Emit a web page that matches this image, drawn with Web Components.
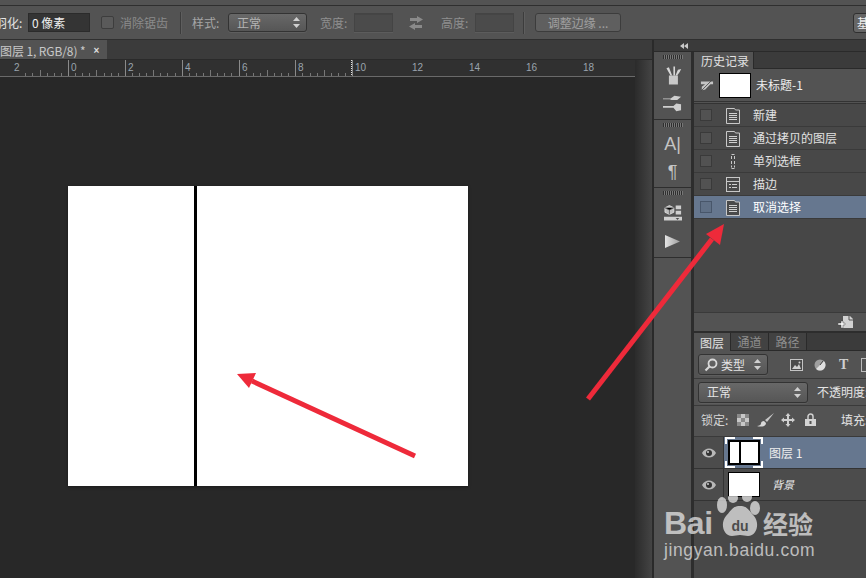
<!DOCTYPE html>
<html lang="zh"><head><meta charset="utf-8"><title>Photoshop</title>
<style>
html,body{margin:0;padding:0;width:866px;height:578px;overflow:hidden;background:#282828}
body{font:12px/1 "Noto Sans CJK SC","Liberation Sans",sans-serif;color:#ddd}
</style></head><body>
<ps-app></ps-app>
<script>
const ICONS={
swap:`<svg width="16" height="14" viewBox="0 0 16 14"><path d="M9 0l6 3.500L9 7V5H2V2h7zM7 7v2h7v3H7v2L1 10.500z" fill="#8a8a8a"/></svg>`,
doc:`<svg width="14" height="17" viewBox="0 0 14 17"><path d="M.5 1.500h8l1 1.500h4v13.500H.500z" fill="#4a4a4a" stroke="#c8c8c8"/><path d="M3 6.500h8M3 8.500h8M3 10.500h8M3 12.500h8" stroke="#d0d0d0"/></svg>`,
stroke:`<svg width="14" height="15" viewBox="0 0 14 15"><rect x=".5" y=".5" width="13" height="14" fill="#4a4a4a" stroke="#c8c8c8"/><path d="M1 4.500h12" stroke="#c8c8c8"/><path d="M3 7.500h2M6 7.500h5M3 10.500h2M6 10.500h5" stroke="#d0d0d0"/></svg>`,
marquee:`<svg width="14" height="17" viewBox="0 0 14 17"><path d="M5.500 1.500h3M5.500 15.500h3M5.500 3v3M8.500 3v3M5.500 8v3M8.500 8v3M5.500 12.500v2M8.500 12.500v2" stroke="#c8c8c8" fill="none"/></svg>`,
brushes:`<svg width="18" height="21" viewBox="0 0 22 24"><path d="M6 12h11v11H6z" fill="#c9c9c9"/><path d="M8 12L3 3l3-1 4 10zM11.500 12V1h2v11zM14 12l3-7 4-1-2 4-3 4z" fill="#d6d6d6"/></svg>`,
presets:`<svg width="19" height="17" viewBox="0 0 20 20" preserveAspectRatio="none"><path d="M0 4h8l4-3 7 1-4 4-6 0-2-1H0z" fill="#cfcfcf"/><path d="M0 13h11l3-3 5 1v7l-5 1-3-4H0z" fill="#cfcfcf"/></svg>`,
box:`<svg width="18" height="18" viewBox="0 0 20 24" preserveAspectRatio="none"><path d="M6 2l5 3v6l-5 3-5-3V5z" fill="#bdbdbd" stroke="#eee" stroke-width=".8"/><path d="M6 8v6M1 5l5 3 5-3" stroke="#555"/><path d="M13 2h6v5h-6zM13 9h6v5h-6z" fill="#cfcfcf"/><path d="M0 17h20v5H0z" fill="#cfcfcf"/><path d="M13 19h4l-2 2z" fill="#222"/></svg>`,
play:`<svg width="15" height="13" viewBox="0 0 16 15" preserveAspectRatio="none"><defs><linearGradient id="g" x1="0" x2="1"><stop offset="0" stop-color="#e4e4e4"/><stop offset="1" stop-color="#9d9d9d"/></linearGradient></defs><path d="M0 0l16 7.500L0 15z" fill="url(#g)"/></svg>`,
newdoc:`<svg width="15" height="13" viewBox="0 0 15 13"><path d="M5 0h7l3 3v9H5z" fill="#d2d2d2"/><path d="M11 0v4h4" fill="none" stroke="#555"/><path d="M3 5h2v2h2v2H5v3H3V9H0V7h3z" fill="#f2f2f2" stroke="#3a3a3a" stroke-width=".4"/></svg>`,
search:`<svg width="14" height="14" viewBox="0 0 14 14"><circle cx="8.500" cy="5.500" r="4" fill="none" stroke="#d8d8d8" stroke-width="1.800"/><path d="M5.500 8.500L1.500 12.500" stroke="#d8d8d8" stroke-width="2.200"/></svg>`,
image:`<svg width="13" height="12" viewBox="0 0 13 12"><rect x=".5" y=".5" width="12" height="11" fill="#4a4a4a" stroke="#c4c4c4"/><path d="M2 10l3-4 2 2 2-3 2 5z" fill="#d0d0d0"/><circle cx="9.500" cy="3.500" r="1" fill="#d0d0d0"/></svg>`,
half:`<svg width="12" height="12" viewBox="0 0 12 12"><circle cx="6" cy="6" r="5.500" fill="#a0a0a0"/><path d="M9.900 2.100A5.500 5.500 0 0 1 2.100 9.900z" fill="#e0e0e0"/><path d="M6 6L9 2" stroke="#444"/></svg>`,
checker:`<svg width="12" height="12" viewBox="0 0 12 12"><rect width="12" height="12" fill="#c8c8c8"/><path d="M0 0h4v4H0zM8 0h4v4H8zM4 4h4v4H4zM0 8h4v4H0zM8 8h4v4H8z" fill="#8a8a8a"/></svg>`,
brush:`<svg width="17" height="14" viewBox="0 0 17 14"><path d="M17 0L8 7l2 2z" fill="#c8c8c8"/><path d="M7 8c-2 0-3 1-3 2.500S2 13 0 13c3 1 9 1 9-3z" fill="#d8d8d8"/></svg>`,
move:`<svg width="14" height="14" viewBox="0 0 14 14"><path d="M7 0l2.500 3H8v3h3V4.500L14 7l-3 2.500V8H8v3h1.500L7 14l-2.500-3H6V8H3v1.500L0 7l3-2.500V6h3V3H4.500z" fill="#cfcfcf"/></svg>`,
lock:`<svg width="11" height="13" viewBox="0 0 11 13"><path d="M3 6V3.500a2.500 2.500 0 0 1 5 0V6" fill="none" stroke="#cfcfcf" stroke-width="1.500"/><rect y="6" width="11" height="7" fill="#d4d4d4"/><rect x="4.500" y="8" width="2" height="3" fill="#555"/></svg>`,
eye:`<svg width="14" height="10" viewBox="0 0 14 10"><path d="M0 5c3-6 11-6 14 0-3 6-11 6-14 0z" fill="#b8b8b8"/><circle cx="7" cy="5" r="3" fill="#333"/><circle cx="6" cy="4" r="1" fill="#ccc"/></svg>`,
state:`<svg width="14" height="13" viewBox="0 0 16 15"><path d="M1 3h14v3H1zM2 9l8-6 3 2-7 7-4 1z" fill="#c4c4c4"/><path d="M1 14L14 1" stroke="#484848"/></svg>`,
updown:`<svg width="7" height="11" viewBox="0 0 7 11"><path d="M3.500 0L7 4H0zM3.500 11L0 7h7z" fill="#d0d0d0"/></svg>`,
collapse:`<svg width="8" height="6" viewBox="0 0 8 6"><path d="M4 0v6L0 3zM8 0v6L4 3z" fill="#c8c8c8"/></svg>`
};
const def=(name,css,html,extra)=>{
  customElements.define(name,class extends HTMLElement{
    constructor(){super();this.attachShadow({mode:"open"});}
    connectedCallback(){
      this.shadowRoot.innerHTML=`<style>${css}</style>`+(typeof html==="function"?html(this):html);
      if(extra)extra(this);
    }
  });
};
def("ps-icon",":host{display:inline-flex;flex:none;line-height:0}","",el=>{el.shadowRoot.innerHTML+=ICONS[el.getAttribute("name")];});

def("ps-label",":host{display:block;flex:none;white-space:nowrap;color:var(--c,#a6a6a6);font-size:12px;line-height:14px}","<slot></slot>");

def("ps-field",`:host{display:block;flex:none;box-sizing:border-box;height:19px;background:#4b4b4b;border:1px solid #444;box-shadow:inset 0 1px 0 #454545,0 1px 0 #5c5c5c}`,"<slot></slot>");

def("ps-select",`:host{display:flex;flex:none;box-sizing:border-box;align-items:center;justify-content:space-between;height:var(--h,20px);padding:0 var(--pr,6px) 0 var(--pl,8px);border:1px solid #333;border-radius:3px;background:linear-gradient(#686868,#565656);color:var(--c,#ddd);box-shadow:0 1px 0 #5e5e5e;white-space:nowrap}`,`<slot></slot><ps-icon name="updown"></ps-icon>`);

def("ps-options",`
:host{display:flex;flex:none;align-items:center;box-sizing:border-box;height:33px;background:#535353;overflow:hidden;position:relative}
.sep{flex:none;width:1px;height:22px;background:#3c3c3c;box-shadow:1px 0 0 #5e5e5e}
.cb{flex:none;box-sizing:border-box;width:13px;height:13px;border:1px solid #3d3d3d;border-radius:2px;background:#5a5a5a}
.btn{flex:none;box-sizing:border-box;width:86px;height:19px;border:1px solid #3c3c3c;border-radius:3px;background:#5f5f5f;color:#a0a0a0;text-align:center;font-size:12px;line-height:17px}
.zero{flex:none;box-sizing:border-box;width:62px;height:19px;background:#343434;border:1px solid #2b2b2b;color:#eee;padding-left:3px;line-height:18px;font-size:12px}
.right{flex:none;box-sizing:border-box;width:20px;height:20px;margin-left:232px;border:1px solid #303030;border-radius:3px;background:#666;color:#eee;padding-left:3px;line-height:18px}
`,`
<ps-label style="margin-left:-5px;width:27px;--c:#e4e4e4">羽化:</ps-label>
<div class="zero" style="margin-left:6px">0 像素</div>
<div class="cb" style="margin-left:11px"></div>
<ps-label style="margin-left:6px;--c:#8b8b8b">消除锯齿</ps-label>
<div class="sep" style="margin-left:12px"></div>
<ps-label style="margin-left:11px;width:30px">样式:</ps-label>
<ps-select style="margin-left:6px;width:79px;--h:19px;--c:#b4b4b4">正常</ps-select>
<ps-label style="margin-left:13px;width:30px;--c:#8f8f8f">宽度:</ps-label>
<ps-field style="margin-left:4px;width:39px"></ps-field>
<ps-icon name="swap" style="margin-left:15px"></ps-icon>
<ps-label style="margin-left:17px;width:30px;--c:#8f8f8f">高度:</ps-label>
<ps-field style="margin-left:4px;width:39px"></ps-field>
<div class="sep" style="margin-left:9px"></div>
<div class="btn" style="margin-left:11px">调整边缘 ...</div>
<div class="right">基</div>`);

def("ps-tabbar",`
:host{display:flex;flex:none;height:20px;background:#3b3b3b;overflow:hidden;box-sizing:border-box;border-bottom:1px solid #2a2a2a}
.tab{display:flex;align-items:center;box-sizing:border-box;width:107px;height:20px;background:#535353;color:#c8c8c8;white-space:nowrap;overflow:hidden;padding-top:1px}
.t{font-size:12px;flex:none;letter-spacing:-.1px}
.x{flex:none;margin-left:8px;color:#ddd;font:bold 10px "Liberation Sans"}
`,`<div class="tab"><span class="t">图层 1, RGB/8) *</span><span class="x">×</span></div>`);

def("ps-ruler",`
:host{display:block;position:relative;flex:none;background:#303030;overflow:hidden;border-bottom:1px solid #6a6a6a;box-sizing:content-box;height:16px}
svg{position:absolute;left:0;top:0}
.n{position:absolute;top:2px;color:#9aa4ad;font:10px/12px "Liberation Sans",sans-serif}
`,"",el=>{
  const o=68,s=28.42;let lines="",ns="";
  for(let i=-6;i<=40;i++){
    const x=o+i*s/4*1;
    const q=((i%8)+8)%8;
    const h=q===0?16:q===4?6:3;
    if(x<635)lines+=`<path d="M${Math.round(x)+.5} ${16-h}V16" stroke="${q===0?'#8a8a8a':'#777'}"/>`;
  }
  [[-2,"2"],[0,"0"],[2,"2"],[4,"4"],[6,"6"],[8,"8"],[10,"10"],[12,"12"],[14,"14"],[16,"16"],[18,"18"]].forEach(([v,l])=>{
    ns+=`<span class="n" style="left:${Math.round(o+v*s)+3}px">${l}</span>`;
  });
  el.shadowRoot.innerHTML+=`<svg width="635" height="16">${lines}<path d="M351.500 0V16" stroke="#ddd" stroke-dasharray="1 1"/></svg>`+ns;
});

def("ps-canvas",`
:host{display:flex;width:400px;height:300px;background:#fff;box-shadow:0 1px 3px rgba(0,0,0,.35)}
.a{width:126px}.l{width:3px;background:#000}
`,`<div class="a"></div><div class="l"></div>`);

def("ps-document",`
:host{display:flex;flex-direction:column;flex:none;width:652px;min-height:0}
.body{flex:1;display:flex;min-height:0}
.col{flex:1;display:flex;flex-direction:column;min-width:0}
.work{flex:1;background:#282828;padding:109px 0 0 68px;box-sizing:border-box}
.gut{flex:none;width:17px;background:linear-gradient(90deg,#2b2b2b,#444)}
`,`<ps-tabbar></ps-tabbar><div class="body"><div class="col"><ps-ruler></ps-ruler><div class="work"><ps-canvas></ps-canvas></div></div><div class="gut"></div></div>`);

def("ps-tool-group",`
:host{display:flex;flex-direction:column;align-items:center;box-sizing:border-box;height:var(--gh);border-bottom:1px solid #2e2e2e;background:#535353;flex:none}
.grip{width:20px;height:4px;margin:3px 0 var(--m,6px);background:repeating-linear-gradient(90deg,#2e2e2e 0 1px,#777 1px 2px)}
.items{display:flex;flex-direction:column;align-items:center;gap:var(--g,9px)}
`,`<div class="grip"></div><div class="items"><slot></slot></div>`);

def("ps-toolstrip",`
:host{display:flex;flex-direction:column;flex:none;width:37px;background:#535353;color:#cfcfcf}
.a{font:18px/20px "Liberation Sans",sans-serif;color:#c4c4c4}
`,`
<ps-tool-group style="--gh:68px;--g:9px;--m:6px"><ps-icon name="brushes"></ps-icon><ps-icon name="presets"></ps-icon></ps-tool-group>
<ps-tool-group style="--gh:68px;--g:8px;--m:7px"><span class="a">A|</span><span class="a">¶</span></ps-tool-group>
<ps-tool-group style="--gh:70px;--g:13px;--m:9px"><ps-icon name="box"></ps-icon><ps-icon name="play"></ps-icon></ps-tool-group>`);

def("ps-tabs",`
:host{display:flex;flex:none;height:var(--th,17px);background:#3b3b3b;box-sizing:border-box;border-bottom:1px solid #2a2a2a}
`,`<slot></slot>`);
def("ps-tab",`
:host{display:flex;align-items:center;justify-content:center;box-sizing:border-box;width:var(--w,38px);height:100%;padding:1px 0 0 var(--pl,0);font-size:12px;color:#8f8f8f;border-right:1px solid #2a2a2a;background:#424242}
:host([active]){background:#535353;color:#e2e2e2;height:calc(100% + 1px)}
`,`<slot></slot>`);

def("ps-history-row",`
:host{display:flex;align-items:center;box-sizing:border-box;height:23px;border-bottom:1px solid #3a3a3a;color:#e2e2e2;background:#484848}
:host([active]){background:#66778f;color:#fff}
.c{flex:none;box-sizing:border-box;width:12px;height:12px;margin-left:6px;border:1px solid #3a3a3a;background:#525252}
:host([active]) .c{background:#607086;border-color:#48566a}
.i{flex:none;width:14px;margin-left:14px;display:flex;justify-content:center}
.t{margin-left:13px;white-space:nowrap;font-size:12px}
`,el=>`<div class="c"></div><div class="i"><ps-icon name="${el.getAttribute("icon")||"doc"}"></ps-icon></div><span class="t"><slot></slot></span>`);

def("ps-history",`
:host{display:flex;flex-direction:column;flex:none;height:279px;background:#474747}
.snap{display:flex;align-items:center;box-sizing:border-box;height:35px;background:#535353;border-bottom:3px double #333;flex:none;padding-left:6px}
.th{flex:none;box-sizing:border-box;width:32px;height:25px;margin-left:5px;background:#fff;border:1px solid #000}
.tt{margin-left:5px;color:#eee;font-size:12px}
.fill{flex:1}
.foot{flex:none;display:flex;justify-content:flex-end;align-items:center;height:19px;box-sizing:border-box;border-top:1px solid #3a3a3a;background:#535353;padding-right:13px}
`,`<ps-tabs><ps-tab active style="--w:60px;--pl:3px">历史记录</ps-tab></ps-tabs>
<div class="snap"><ps-icon name="state"></ps-icon><div class="th"></div><span class="tt">未标题-1</span></div>
<ps-history-row>新建</ps-history-row>
<ps-history-row>通过拷贝的图层</ps-history-row>
<ps-history-row icon="marquee">单列选框</ps-history-row>
<ps-history-row icon="stroke">描边</ps-history-row>
<ps-history-row icon="doc" active>取消选择</ps-history-row>
<div class="fill"></div>
<div class="foot"><ps-icon name="newdoc"></ps-icon></div>`);

def("ps-layer-row",`
:host{display:flex;align-items:center;box-sizing:border-box;height:32px;border-bottom:1px solid #333;background:#4c4c4c;flex:none}
.e{flex:none;width:30px;box-sizing:border-box;height:100%;border-right:1px solid #333;display:flex;align-items:center;justify-content:center;background:#4c4c4c;margin-right:4px}
:host([active]){background:#66778f}
.th{flex:none;box-sizing:border-box;position:relative;width:32px;height:25px;background:#fff;border:1px solid #000;display:flex}
:host([active]) .th{border-width:2px}
.d{display:none;width:2px;background:#000;margin-left:9px}
:host([active]) .d{display:block}
.b{display:none;position:absolute;inset:-5px;pointer-events:none;--k:#fff;background:
 linear-gradient(var(--k),var(--k)) 0 0/10px 2px no-repeat,linear-gradient(var(--k),var(--k)) 0 0/2px 7px no-repeat,
 linear-gradient(var(--k),var(--k)) 100% 0/10px 2px no-repeat,linear-gradient(var(--k),var(--k)) 100% 0/2px 7px no-repeat,
 linear-gradient(var(--k),var(--k)) 0 100%/10px 2px no-repeat,linear-gradient(var(--k),var(--k)) 0 100%/2px 7px no-repeat,
 linear-gradient(var(--k),var(--k)) 100% 100%/10px 2px no-repeat,linear-gradient(var(--k),var(--k)) 100% 100%/2px 7px no-repeat}
:host([active]) .b{display:block}
.t{margin-left:9px;color:#eee;white-space:nowrap;font-size:12px}
:host(:not([active])) .t{font-style:italic;font-size:11px;margin-left:12px}
`,`<div class="e"><ps-icon name="eye"></ps-icon></div><div class="th"><div class="d"></div><div class="b"></div></div><span class="t"><slot></slot></span>`);

def("ps-layers",`
:host{display:flex;flex-direction:column;flex:1;background:#484848;min-height:0;overflow:hidden}
.r{display:flex;align-items:center;flex:none;box-sizing:border-box;background:#535353;border-bottom:1px solid #3a3a3a;overflow:hidden;white-space:nowrap}
.r1{height:28px;padding-left:4px}
.r2{height:27px;padding-left:4px}
.r3{height:31px;padding:0 0 3px 7px}
.T{font:bold 14px/14px "Liberation Serif",serif;color:#cfcfcf}
`,`<ps-tabs style="--th:18px"><ps-tab active style="--w:37px">图层</ps-tab><ps-tab>通道</ps-tab><ps-tab>路径</ps-tab></ps-tabs>
<div class="r r1"><ps-select style="width:70px;--h:21px;--pl:5px;--c:#e4e4e4"><span style="display:flex;align-items:center;gap:3px"><ps-icon name="search"></ps-icon>类型</span></ps-select>
<ps-icon name="image" style="margin-left:22px"></ps-icon><ps-icon name="half" style="margin-left:11px"></ps-icon><span class="T" style="margin-left:13px">T</span><div style="width:10px;height:12px;border:1px solid #bbb;margin-left:13px;flex:none"></div></div>
<div class="r r2"><ps-select style="width:110px;--h:21px;--c:#e4e4e4">正常</ps-select><ps-label style="margin-left:9px;--c:#e4e4e4">不透明度:</ps-label></div>
<div class="r r3"><ps-label style="--c:#d4d4d4;width:36px">锁定:</ps-label><ps-icon name="checker"></ps-icon><ps-icon name="brush" style="margin-left:8px"></ps-icon><ps-icon name="move" style="margin-left:7px"></ps-icon><ps-icon name="lock" style="margin-left:10px"></ps-icon><ps-label style="margin-left:25px;--c:#e4e4e4">填充:</ps-label></div>
<ps-layer-row active>图层 1</ps-layer-row>
<ps-layer-row>背景</ps-layer-row>`);

def("ps-dock",`
:host{display:flex;flex-direction:column;flex:1;min-width:0;background:#2d2d2d;border-left:2px solid #2a2a2a;box-sizing:border-box}
.top{flex:none;height:12px;background:#3a3a3a;display:flex;align-items:center;padding-left:26px;border-bottom:1px solid #2a2a2a;box-sizing:border-box}
.cols{flex:1;display:flex;min-height:0;gap:3px}
.panels{flex:1;min-width:0;display:flex;flex-direction:column;gap:2px}
`,`<div class="top"><ps-icon name="collapse"></ps-icon></div><div class="cols"><ps-toolstrip></ps-toolstrip><div class="panels"><ps-history></ps-history><ps-layers></ps-layers></div></div>`);

def("ps-arrows",`:host{position:absolute;left:0;top:0;width:866px;height:578px;pointer-events:none}svg{display:block}`,
`<svg width="866" height="578"><g fill="#ee2a3a"><path d="M415 456L252 381" stroke="#ee2a3a" stroke-width="5" fill="none"/><path d="M237 374l19-1-7 15z"/><path d="M588 399L712 239" stroke="#ee2a3a" stroke-width="5" fill="none"/><path d="M724 224l-4 21-14-11z"/></g></svg>`);

def("ps-watermark",`
:host{position:absolute;left:664px;top:496px;width:160px;height:66px;pointer-events:none;color:rgba(235,235,235,.72)}
.bai{position:absolute;left:0;top:11px;font:bold 32px/32px "Liberation Sans",sans-serif;letter-spacing:-.3px}
.jy{position:absolute;left:99px;top:13px;font:bold 25px/28px "Noto Sans CJK SC",sans-serif;white-space:nowrap;letter-spacing:0}
.url{position:absolute;left:0;top:44px;font:17.500px/20px "Liberation Sans",sans-serif;white-space:nowrap;letter-spacing:.6px}
.du{position:absolute;left:63px;top:23px;width:26px;text-align:center;color:#4c4c4c;font:bold 14px/14px "Liberation Sans",sans-serif}
svg{position:absolute;left:50px;top:0}
`,`<svg width="50" height="42" viewBox="0 0 50 42"><g fill="rgba(235,235,235,.72)"><ellipse cx="8" cy="9" rx="5" ry="8"/><ellipse cx="19" cy="2" rx="5" ry="5"/><ellipse cx="33" cy="1" rx="5" ry="5"/><ellipse cx="41" cy="12" rx="5" ry="7"/><path d="M26 10c8 0 9 5 14 10 6 7 3 20-6 20-3 0-5-1-8-1s-5 1-8 1C9 40 6 27 12 20c5-5 6-10 14-10z"/></g></svg><span class="bai">Bai</span><span class="du">du</span><span class="jy">经验</span><span class="url">jingyan.baidu.com</span>`);

def("ps-app",`
:host{display:flex;flex-direction:column;position:relative;width:866px;height:578px;overflow:hidden;background:#535353}
.strip{flex:none;height:5px;background:#535353;border-bottom:1px solid #2f2f2f}
.sp{flex:none;height:1px;background:#2f2f2f}
.main{flex:1;display:flex;min-height:0}
`,`<div class="strip"></div><ps-options></ps-options><div class="sp"></div><div class="main"><ps-document></ps-document><ps-dock></ps-dock></div><ps-arrows></ps-arrows><ps-watermark></ps-watermark>`);
</script></body></html>
